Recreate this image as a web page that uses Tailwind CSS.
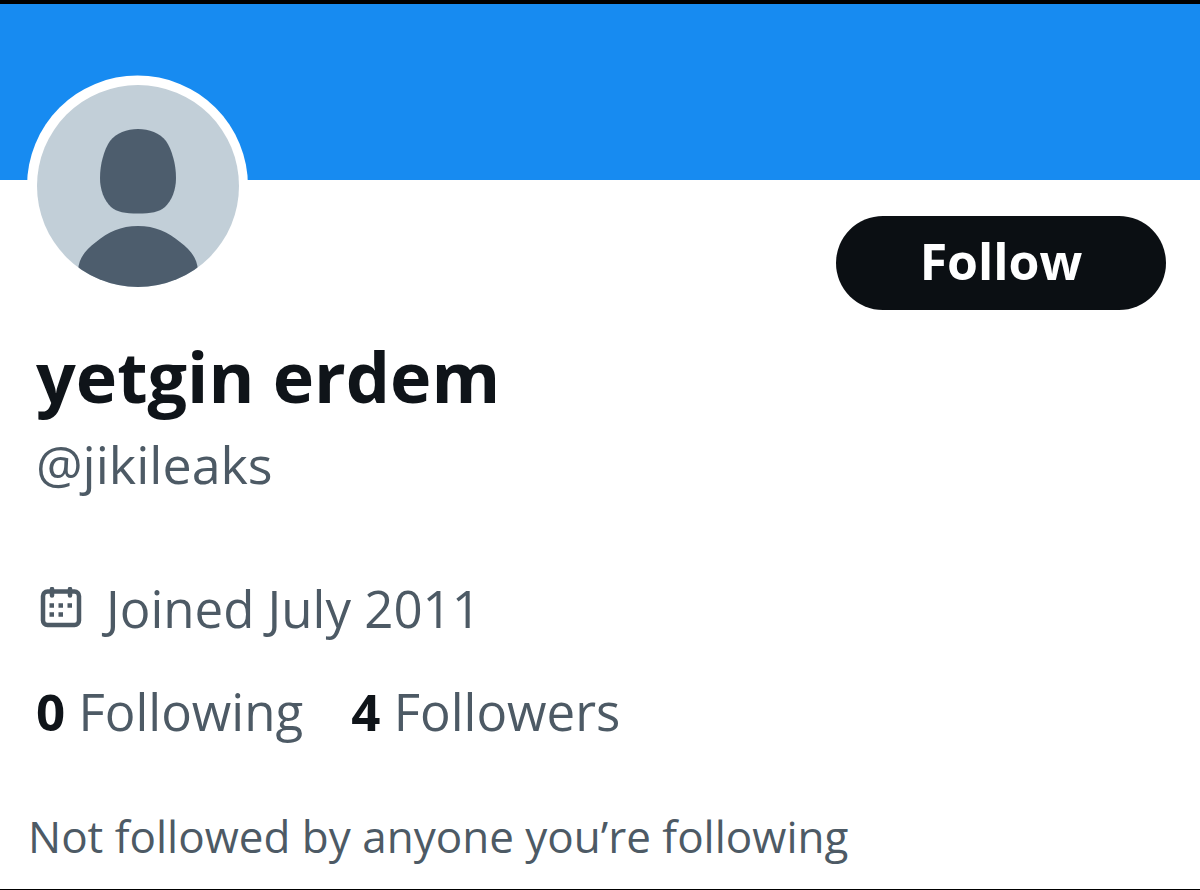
<!DOCTYPE html>
<html lang="en">
<head>
    <meta charset="utf-8"/>
    <meta content="width=device-width, initial-scale=1.0" name="viewport"/>
    <title>yetgin erdem (@jikileaks)</title>
    <script src="https://cdn.jsdelivr.net/npm/@tailwindcss/browser@4"></script>
</head>
<body class="bg-white font-['Open_Sans','Noto_Sans',sans-serif] text-[#4d5a65]">
    <main class="flex min-h-screen flex-col border-t-4 border-b border-black">
        <div class="h-44 bg-[#178bf1]"></div>

        <div class="flex items-start justify-between pl-[27px] pr-[34px]">
            <!-- default avatar -->
            <svg class="-mt-[105px] size-[222px] shrink-0" viewBox="0 0 222 222" role="img" aria-label="Profile picture">
                <defs>
                    <clipPath id="face"><circle cx="111" cy="111" r="101"/></clipPath>
                </defs>
                <circle cx="110.500" cy="111" r="110.500" fill="#fff"/>
                <circle cx="111" cy="111" r="101" fill="#c2cfd8"/>
                <g clip-path="url(#face)" fill="#4d5d6d">
                    <path d="M111 54C122 54 133 58 139 66C145 75 149 89 149 103C149 115 145 125 138 132C132 137 124 138.500 111 138.500C98 138.500 90 137 84 132C77 125 73 115 73 103C73 89 77 75 83 66C89 58 100 54 111 54Z"/>
                    <path d="M111 151C128 151 141 157 153 167C165 176 170 184 171 195V222H51V195C52 184 57 176 69 167C81 157 94 151 111 151Z"/>
                </g>
            </svg>
            <button type="button" class="mt-9 h-[94px] w-[330px] rounded-full bg-[#0b0f13] pb-1 text-[50px] font-bold text-white">Follow</button>
        </div>

        <div class="px-9">
            <h1 class="mt-[26px] text-[70px] leading-20 font-bold text-[#0f1419]">yetgin erdem</h1>
            <p class="mt-4 text-[52px] leading-16">@jikileaks</p>
            <p class="mt-20 flex items-center gap-6 text-[51px] leading-16">
                <svg class="ml-1 size-[42px] shrink-0" viewBox="0 0 42 42" fill="none" stroke="currentColor" aria-hidden="true">
                    <rect x="3" y="4.500" width="36" height="33.500" rx="4.500" stroke-width="4.500"/>
                    <path d="M12 2V8.500M30 2V8.500" stroke-width="4.500" stroke-linecap="round"/>
                    <path d="M9.500 18.500H14M18.500 18.500H23M27.500 18.500H32M9.500 27.500H14M18.500 27.500H23" stroke-width="4.500"/>
                </svg>
                <span>Joined July 2011</span>
            </p>
            <div class="mt-[39px] flex flex-wrap gap-x-12 text-[51px] leading-16">
                <a href="#following"><b class="text-[#0f1419]">0</b> Following</a>
                <a href="#followers"><b class="text-[#0f1419]">4</b> Followers</a>
            </div>
        </div>

        <p class="mt-[61px] pb-5 pl-7 text-[44px] leading-16">Not followed by anyone you’re following</p>
    </main>
</body>
</html>
